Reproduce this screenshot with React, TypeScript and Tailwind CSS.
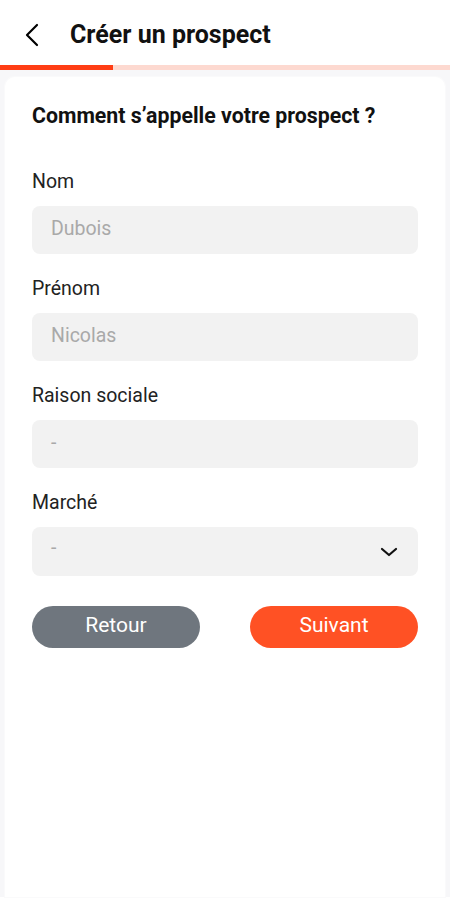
import React from 'react';

const fields = [
  { label: 'Nom', placeholder: 'Dubois' },
  { label: 'Prénom', placeholder: 'Nicolas' },
  { label: 'Raison sociale', placeholder: '-' },
];

export default function App() {
  return (
    <div className="min-h-[900px] bg-white" style={{ fontFamily: 'Roboto, "Noto Sans", sans-serif' }}>
      {/* header */}
      <div className="flex h-[65px] items-center pt-[5px]">
        <button className="ml-[20px] flex h-[24px] w-[24px] items-center justify-center text-black">
          <svg width="20" height="24" viewBox="0 0 20 24" fill="none" stroke="currentColor" strokeWidth={2.2} strokeLinecap="round" strokeLinejoin="round">
            <path d="M15 2 L5 12 L15 22" />
          </svg>
        </button>
        <h1 className="ml-[26px] text-[25px] font-bold leading-[30px] text-[#111]">Créer un prospect</h1>
      </div>

      {/* progress */}
      <div className="flex h-[5px]">
        <div className="w-[113px] bg-[#ff3d14]" />
        <div className="flex-1 bg-[#fdd9d0]" />
      </div>

      <div className="bg-[#f7f7f9] pt-[7px]">
        <div className="mx-[5px] min-h-[820px] rounded-t-[10px] bg-white px-[27px] pt-[26px] shadow-[0_0_0_1px_#fafafb]">
          <h2 className="text-[21.3px] font-bold leading-[26px] text-[#111]">Comment s’appelle votre prospect ?</h2>

          <div className="mt-[41px] flex flex-col gap-[23px]">
            {fields.map((f) => (
              <div key={f.label}>
                <label className="block text-[19.5px] leading-[24px] text-[#222]">{f.label}</label>
                <div className="mt-[12px] flex h-[48px] items-center rounded-[8px] bg-[#f2f2f2] px-[19px] pb-[3px] text-[19.5px] text-[#a9a9a9]">
                  {f.placeholder}
                </div>
              </div>
            ))}
            <div>
              <label className="block text-[19.5px] leading-[24px] text-[#222]">Marché</label>
              <div className="mt-[12px] flex h-[49px] items-center justify-between rounded-[8px] bg-[#f2f2f2] pl-[19px] pr-[20px] text-[19.5px] text-[#a9a9a9]">
                <span className="-mt-[8px]">-</span>
                <svg width="18" height="10" viewBox="0 0 18 10" fill="none" stroke="#111" strokeWidth={2.2} strokeLinecap="round" strokeLinejoin="round">
                  <path d="M2 2 L9 8 L16 2" />
                </svg>
              </div>
            </div>
          </div>

          <div className="mt-[30px] flex justify-between">
            <button className="h-[42px] w-[168px] rounded-full bg-[#6f767e] pb-[2px] text-[21px] text-white">Retour</button>
            <button className="h-[42px] w-[168px] rounded-full bg-[#ff5124] pb-[2px] text-[21px] text-white">Suivant</button>
          </div>
        </div>
      </div>
    </div>
  );
}
